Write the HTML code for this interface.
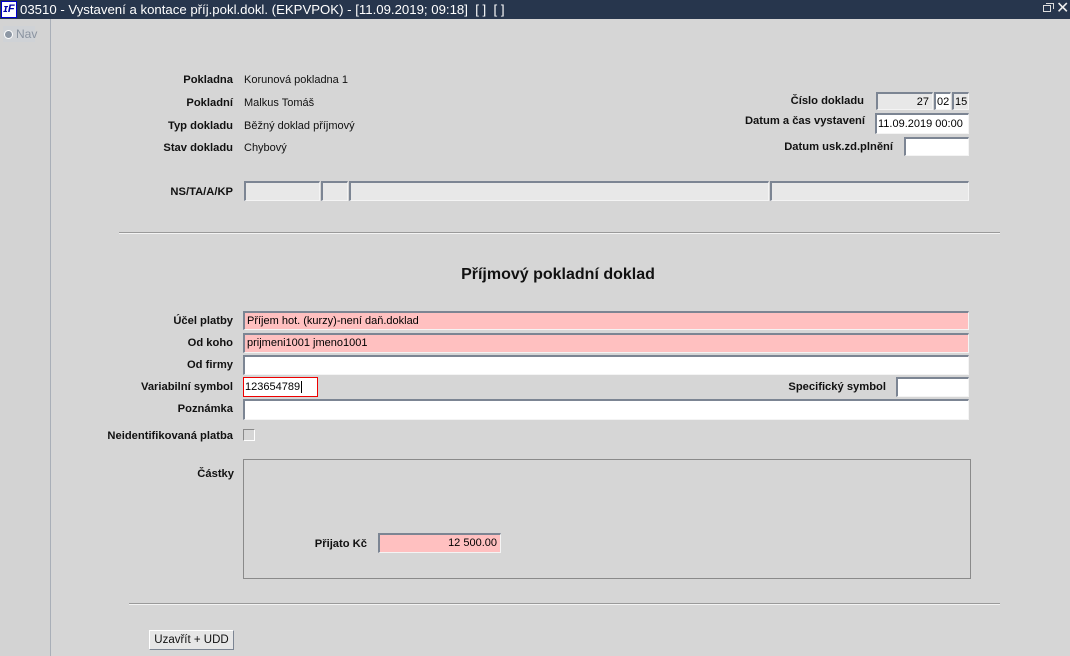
<!DOCTYPE html>
<html><head><meta charset="utf-8"><style>
*{margin:0;padding:0;box-sizing:border-box}
body{width:1070px;height:656px;background:#d6d6d6;font-family:"Liberation Sans",Arial,sans-serif;position:relative;overflow:hidden}
.a{position:absolute}
#tb{left:0;top:0;width:1070px;height:19px;background:#27364d;color:#fff;font-size:13.2px;line-height:19px}
#side{left:0;top:19px;width:51px;height:637px;background:#d3d3d3;border-right:1px solid #a9afb8}
.l{position:absolute;font-size:11.2px;font-weight:bold;color:#111;text-align:right;white-space:nowrap;margin-top:1px}
.v{position:absolute;font-size:11px;color:#111;white-space:nowrap}
.f{position:absolute;background:#fff;border:1px solid;border-color:#7c8593 #f4f4f4 #f4f4f4 #7c8593;border-width:2px 1px 1px 2px;font-size:11px;line-height:16px;padding-left:2px;color:#000;white-space:nowrap;overflow:hidden}
.g{background:#e8e8e8}
.p{background:#ffc0c0}
.hr{position:absolute;height:2px;border-top:1px solid #9a9a9a;border-bottom:1px solid #f4f4f4}
</style></head><body>
<div id="tb" class="a">
 <div class="a" style="left:1px;top:1px;width:16px;height:17px;background:#fff;border:1px solid #00c;color:#00a;font:italic bold 11px/15px 'Liberation Sans',sans-serif;text-align:center">ɪF</div>
 <span class="a" style="left:20px;top:0">03510 - Vystavení a kontace příj.pokl.dokl. (EKPVPOK) - [11.09.2019; 09:18]&nbsp; [ ]&nbsp; [ ]</span>
 <div class="a" style="left:1043px;top:5px;width:8px;height:7px;border:1px solid #ddd"></div>
 <div class="a" style="left:1046px;top:3px;width:8px;height:6px;border:1px solid #ddd;border-bottom:none;border-left:none"></div>
 <span class="a" style="left:1056px;top:-1px;font-size:16px;color:#eee">✕</span>
</div>
<div id="side" class="a">
 <div class="a" style="left:3px;top:7px;width:32px;height:16px;background:#cfd2d6;font-size:12px;color:#8a93a0;line-height:16px;padding-left:13px">Nav</div>
 <div class="a" style="left:4px;top:11px;width:9px;height:9px;border-radius:50%;background:#8d97a4;border:1px solid #fff"></div>
</div>

<div class="l" style="right:837px;top:73px">Pokladna</div><div class="v" style="left:244px;top:74px">Korunová pokladna 1</div>
<div class="l" style="right:837px;top:96px">Pokladní</div><div class="v" style="left:244px;top:97px">Malkus Tomáš</div>
<div class="l" style="right:837px;top:119px">Typ dokladu</div><div class="v" style="left:244px;top:120px">Běžný doklad příjmový</div>
<div class="l" style="right:837px;top:141px">Stav dokladu</div><div class="v" style="left:244px;top:142px">Chybový</div>
<div class="l" style="right:837px;top:185px">NS/TA/A/KP</div>

<div class="l" style="right:206px;top:94px">Číslo dokladu</div>
<div class="f g" style="left:876px;top:92px;width:57px;height:18px;text-align:right;padding-right:3px">27</div>
<div class="f" style="left:934px;top:92px;width:17px;height:18px;padding-left:1px">02</div>
<div class="f g" style="left:952px;top:92px;width:17px;height:18px;padding-left:1px">15</div>
<div class="l" style="right:205px;top:114px">Datum a čas vystavení</div>
<div class="f" style="left:875px;top:113px;width:94px;height:21px;line-height:19px;padding-left:1px">11.09.2019 00:00</div>
<div class="l" style="right:177px;top:140px">Datum usk.zd.plnění</div>
<div class="f" style="left:904px;top:137px;width:65px;height:19px"></div>

<div class="f g" style="left:244px;top:181px;width:76px;height:20px"></div>
<div class="f g" style="left:321px;top:181px;width:27px;height:20px"></div>
<div class="f g" style="left:349px;top:181px;width:420px;height:20px"></div>
<div class="f g" style="left:770px;top:181px;width:199px;height:20px"></div>

<div class="hr" style="left:119px;top:232px;width:881px"></div>
<div class="a" style="left:0;width:1116px;top:266px;text-align:center;font-size:16px;font-weight:bold;color:#111">Příjmový pokladní doklad</div>

<div class="l" style="right:837px;top:314px">Účel platby</div>
<div class="f p" style="left:243px;top:311px;width:726px;height:19px">Příjem hot. (kurzy)-není daň.doklad</div>
<div class="l" style="right:837px;top:336px">Od koho</div>
<div class="f p" style="left:243px;top:333px;width:726px;height:20px;line-height:17px">prijmeni1001 jmeno1001</div>
<div class="l" style="right:837px;top:358px">Od firmy</div>
<div class="f" style="left:243px;top:355px;width:726px;height:20px"></div>
<div class="l" style="right:837px;top:380px">Variabilní symbol</div>
<div class="a" style="left:243px;top:377px;width:75px;height:20px;background:#fff;border:1px solid #e00;font-size:11px;line-height:18px;padding-left:1px">123654789<span style="border-left:1px solid #000;margin-left:1px"></span></div>
<div class="l" style="right:184px;top:380px">Specifický symbol</div>
<div class="f" style="left:896px;top:377px;width:73px;height:20px"></div>
<div class="l" style="right:837px;top:402px">Poznámka</div>
<div class="f" style="left:243px;top:399px;width:726px;height:21px"></div>
<div class="l" style="right:837px;top:429px">Neidentifikovaná platba</div>
<div class="a" style="left:243px;top:429px;width:12px;height:12px;background:#d6d6d6;border:1px solid;border-color:#8a8a8a #fff #fff #8a8a8a"></div>

<div class="l" style="right:836px;top:467px">Částky</div>
<div class="a" style="left:243px;top:459px;width:728px;height:120px;border:1px solid #8a8a8a"></div>
<div class="l" style="right:703px;top:537px">Přijato Kč</div>
<div class="f p" style="left:378px;top:533px;width:123px;height:20px;text-align:right;padding-right:3px">12 500.00</div>

<div class="hr" style="left:129px;top:603px;width:871px"></div>
<div class="a" style="left:149px;top:630px;width:85px;height:20px;background:#e6e6e6;border:1px solid;border-color:#fff #7c8593 #7c8593 #fff;font-size:11.5px;line-height:18px;text-align:center;color:#111">Uzavřít + UDD</div>
</body></html>
